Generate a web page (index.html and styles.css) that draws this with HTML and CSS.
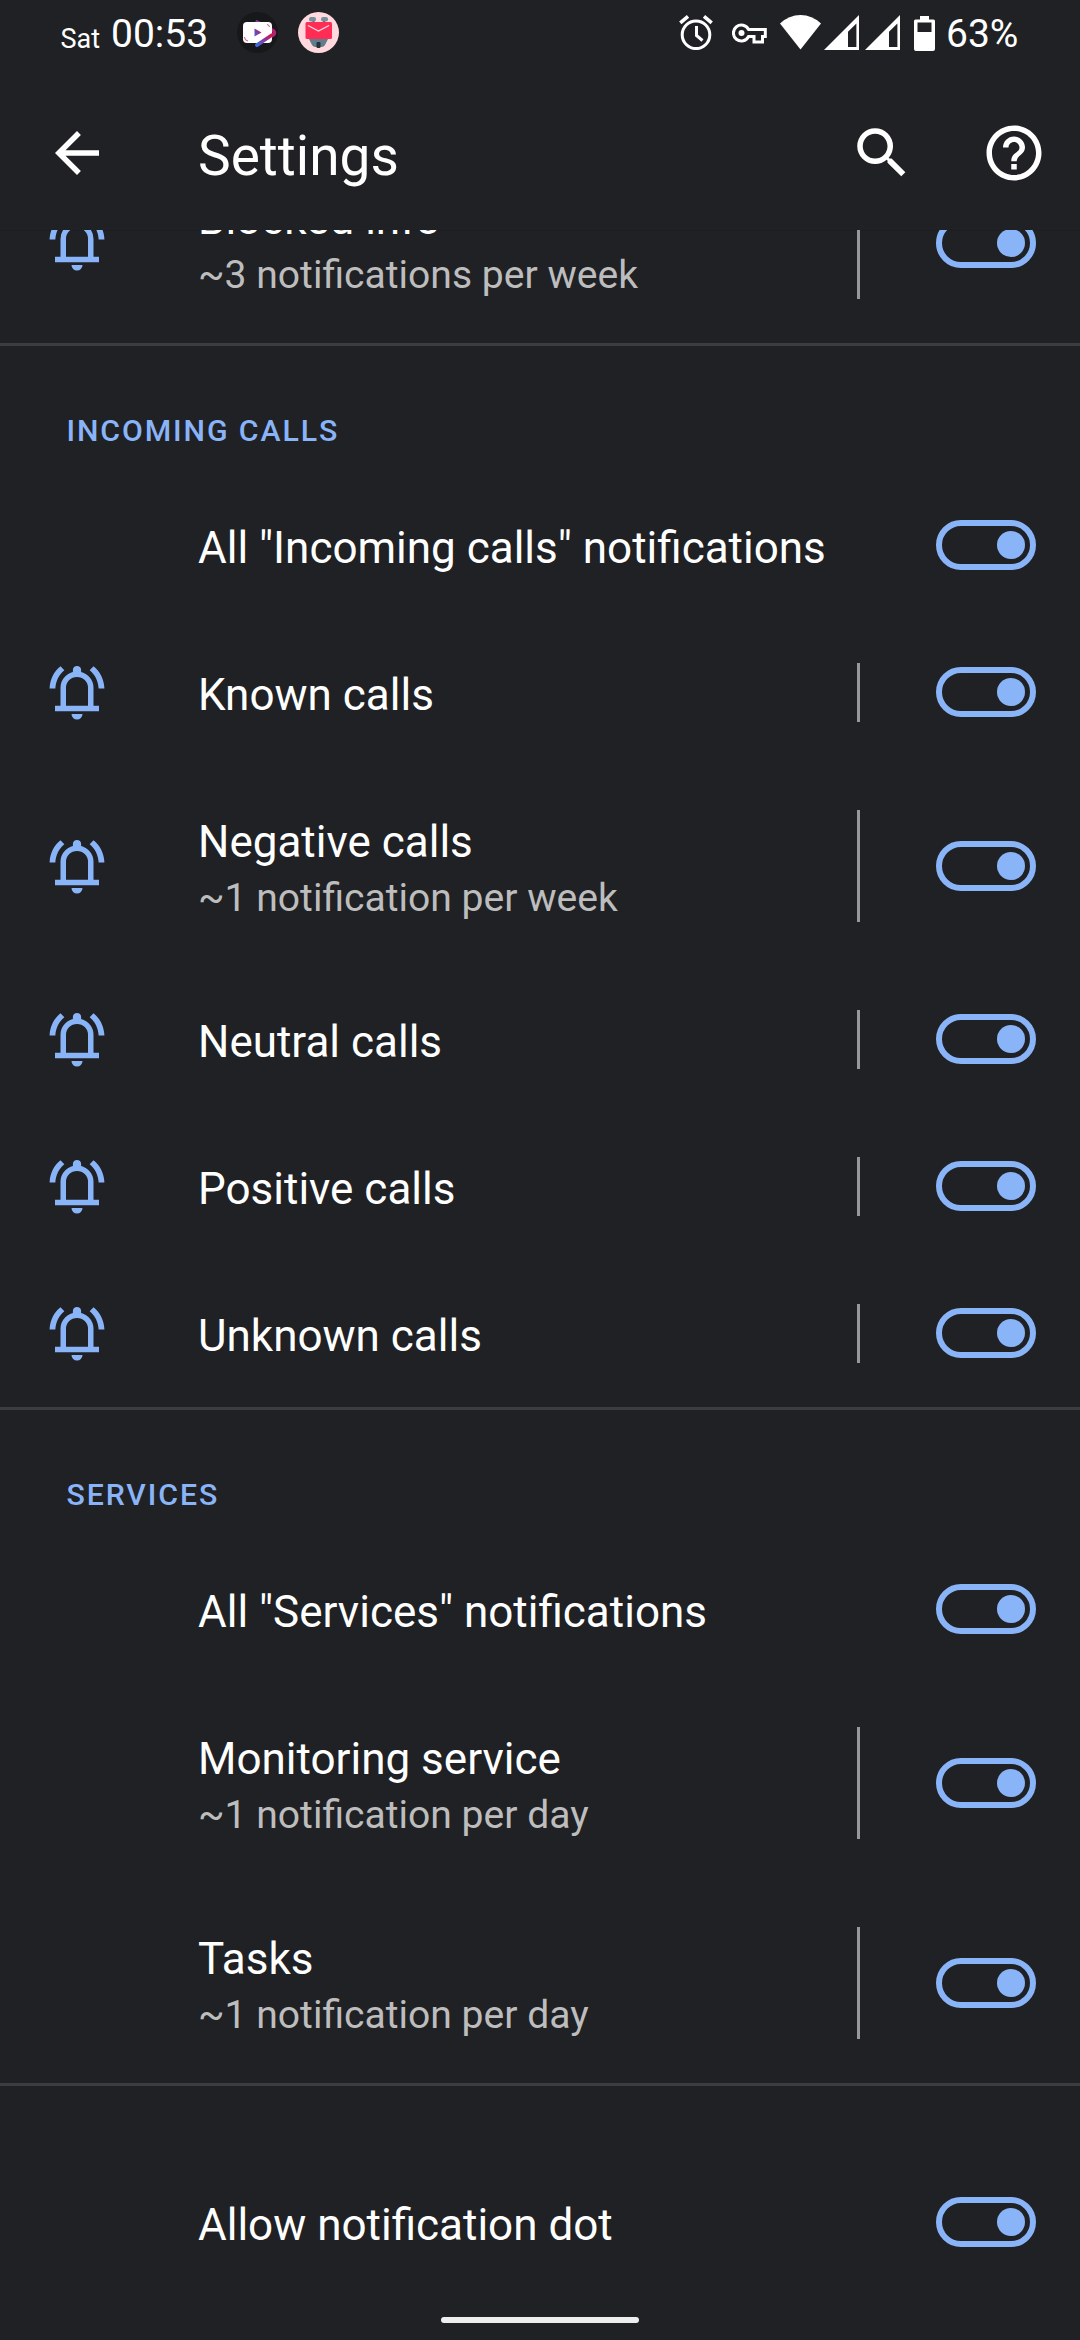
FILE: index.html
```html
<!DOCTYPE html>
<html lang="en">
<head>
<meta charset="utf-8">
<title>Settings</title>
<link rel="stylesheet" href="styles.css">
</head>
<body>
<svg class="defs" aria-hidden="true">
  <symbol id="bell" viewBox="0 0 24 24">
    <path d="M7 17.5V10.5a5 5 0 0 1 10 0V17.5" fill="none" stroke="currentColor" stroke-width="2"/>
    <path fill="currentColor" d="M4 17h16v2H4zM10 20h4a2 2 0 0 1-4 0zM10.5 5V4a1.5 1.5 0 0 1 3 0v1zM7.4 4.08L6 2.65C3.65 4.5 2.17 7.4 2.03 10.7h2.1c.12-2.65 1.3-5 3.27-6.62zM19.87 10.7h2.1c-.14-3.3-1.62-6.2-3.97-8.05l-1.4 1.43c1.97 1.62 3.15 3.97 3.27 6.62z"/>
  </symbol>
  <symbol id="signal" viewBox="0 0 35 35">
    <path fill="#fff" fill-rule="evenodd" d="M35 0V35H0zM32.400 8.500L24 16.800V32h8.400z"/>
  </symbol>
</svg>
<div class="screen">
  <header class="status">
    <span class="day">Sat</span>
    <span class="time">00:53</span>
    <svg class="app app-video" viewBox="0 0 41 41">
      <defs><linearGradient id="swoosh" x1="0" y1="1" x2="1" y2="0"><stop offset="0" stop-color="#3f6be0"/><stop offset=".55" stop-color="#8a3595"/><stop offset="1" stop-color="#e0104f"/></linearGradient></defs>
      <circle cx="20.500" cy="20.500" r="20.500" fill="#17181a"/>
      <path d="M20 10l16 8.500q3 2 0 4.500L20 33" fill="none" stroke="url(#swoosh)" stroke-width="3.600" stroke-linecap="round" stroke-linejoin="round"/>
      <rect x="6" y="10" width="29" height="21" rx="4" fill="#fff"/>
      <path d="M35 23L20 33" stroke="url(#swoosh)" stroke-width="3.400" stroke-linecap="round"/>
      <path d="M30 12.500q2 0 2.500 2.500M7.500 25q0 3.500 3.500 4" stroke="#c42660" stroke-width=".8" fill="none"/>
      <path d="M17.500 16.500v8l7-4z" fill="url(#swoosh)"/>
    </svg>
    <svg class="app" viewBox="0 0 41 41">
      <circle cx="20.500" cy="20.500" r="20.500" fill="#ffd9de"/>
      <path d="M14.500 7h2v4h-2zM25 7h2v4h-2z" fill="#455a64"/>
      <rect x="11" y="5" width="7" height="4.500" rx="2" fill="#78909c"/><rect x="23" y="5" width="7" height="4.500" rx="2" fill="#78909c"/>
      <path d="M10 25h21l-4 8q-1 2-3.500 2h-6q-2.500 0-3.500-2z" fill="#607d8b"/>
      <rect x="7.500" y="10" width="26.500" height="17" rx="1.500" fill="#ff2d55"/>
      <path d="M10 13.500l10.500 5.500L31 13.500" fill="none" stroke="#ffd9de" stroke-width="1.300"/>
      <rect x="18.500" y="30" width="4" height="6" rx="1" fill="#263238"/>
    </svg>
    <div class="indicators">
      <svg class="alarm" viewBox="0 0 34 35"><g fill="none" stroke="#fff"><circle cx="17" cy="19.800" r="13.800" stroke-width="3"/><path d="M1.300 7.800L9 1.400M32.700 7.800L25 1.400" stroke-width="3.600"/><path d="M17.500 11v9.500l6 5" stroke-width="3"/></g></svg>
      <svg class="key" viewBox="0 0 35 21"><path d="M16.600 6.500H33.300V13.500H30.500V19H22V13.500H16.600A8 8 0 1 1 16.600 6.500z" fill="none" stroke="#fff" stroke-width="3"/><circle cx="9.500" cy="10" r="3" fill="#fff"/></svg>
      <svg class="wifi" viewBox="0 0 41 35"><path d="M0 8.500Q9 0 20.500 0T41 8.500L20.500 34.500z" fill="#fff"/></svg>
      <svg class="signal"><use href="#signal"/></svg>
      <svg class="signal"><use href="#signal"/></svg>
      <svg class="battery" viewBox="0 0 21 35"><path fill="#fff" fill-rule="evenodd" d="M6 0h9v3.500h4.500q1.500 0 1.500 1.500v28q0 2-2 2H2q-2 0-2-2V5q0-1.500 1.500-1.500H6zM3.500 6.500V16h14V6.500z"/></svg>
      <span class="percent">63%</span>
    </div>
  </header>

  <nav class="appbar">
    <svg class="icon" viewBox="0 0 24 24"><path fill="#fff" d="M20 11H7.830l5.590-5.590L12 4l-8 8 8 8 1.410-1.410L7.830 13H20z"/></svg>
    <h1 class="title">Settings</h1>
    <svg class="icon search" viewBox="0 0 24 24"><path fill="#fff" d="M15.500 14h-.79l-.28-.27A6.471 6.471 0 0 0 16 9.500 6.500 6.500 0 1 0 9.500 16c1.610 0 3.090-.59 4.230-1.570l.27.28v.79l5 4.990L20.490 19zm-6 0C7.010 14 5 11.990 5 9.500S7.010 5 9.500 5 14 7.010 14 9.500 11.990 14 9.500 14z"/></svg>
    <svg class="icon" viewBox="0 0 24 24"><path fill="#fff" d="M11 18h2v-2h-2zm1-16C6.480 2 2 6.480 2 12s4.480 10 10 10 10-4.480 10-10S17.520 2 12 2zm0 18c-4.410 0-8-3.590-8-8s3.590-8 8-8 8 3.590 8 8-3.590 8-8 8zm0-14c-2.210 0-4 1.790-4 4h2c0-1.100.9-2 2-2s2 .9 2 2c0 2-3 1.750-3 5h2c0-2.250 3-2.500 3-5 0-2.210-1.790-4-4-4z"/></svg>
  </nav>

  <main class="list">
    <section class="group scrolled">
      <div class="row"><svg class="bell"><use href="#bell"/></svg><div class="text"><div class="name">Blocked info</div><div class="summary">~3 notifications per week</div></div><i class="sep"></i><i class="switch"></i></div>
    </section>

    <section class="group">
      <h2 class="category">INCOMING CALLS</h2>
      <div class="row"><div class="text"><div class="name">All "Incoming calls" notifications</div></div><i class="switch"></i></div>
      <div class="row"><svg class="bell"><use href="#bell"/></svg><div class="text"><div class="name">Known calls</div></div><i class="sep"></i><i class="switch"></i></div>
      <div class="row"><svg class="bell"><use href="#bell"/></svg><div class="text"><div class="name">Negative calls</div><div class="summary">~1 notification per week</div></div><i class="sep"></i><i class="switch"></i></div>
      <div class="row"><svg class="bell"><use href="#bell"/></svg><div class="text"><div class="name">Neutral calls</div></div><i class="sep"></i><i class="switch"></i></div>
      <div class="row"><svg class="bell"><use href="#bell"/></svg><div class="text"><div class="name">Positive calls</div></div><i class="sep"></i><i class="switch"></i></div>
      <div class="row"><svg class="bell"><use href="#bell"/></svg><div class="text"><div class="name">Unknown calls</div></div><i class="sep"></i><i class="switch"></i></div>
    </section>

    <section class="group">
      <h2 class="category">SERVICES</h2>
      <div class="row"><div class="text"><div class="name">All "Services" notifications</div></div><i class="switch"></i></div>
      <div class="row"><div class="text"><div class="name">Monitoring service</div><div class="summary">~1 notification per day</div></div><i class="sep"></i><i class="switch"></i></div>
      <div class="row"><div class="text"><div class="name">Tasks</div><div class="summary">~1 notification per day</div></div><i class="sep"></i><i class="switch"></i></div>
    </section>

    <section class="group last">
      <div class="row"><div class="text"><div class="name">Allow notification dot</div></div><i class="switch"></i></div>
    </section>
  </main>
  <div class="home"></div>
</div>
</body>
</html>
```
FILE: styles.css
```css
* { box-sizing: border-box; }
body {
  margin: 0;
  background: #202124;
  color: #fff;
  font-family: Roboto, "Liberation Sans", sans-serif;
}
h1, h2 { margin: 0; font-weight: 400; }
svg { display: block; flex: none; }
.defs { width: 0; height: 0; position: absolute; }

.screen {
  position: relative;
  display: flex;
  flex-direction: column;
  width: 1080px;
  height: 2340px;
  overflow: hidden;
  background: #202124;
}

/* status bar */
.status {
  display: flex;
  align-items: flex-start;
  height: 76px;
  padding: 0 62px 0 60.5px;
  white-space: nowrap;
}
.day { width: 50.5px; font-size: 27px; line-height: 32px; padding-top: 23px; }
.time { width: 126px; font-size: 39px; line-height: 45px; padding-top: 12px; }
.app { width: 41px; height: 41px; margin-top: 12px; }
.app-video { margin-right: 20px; }
.indicators { display: flex; align-items: flex-start; margin-left: auto; }
.alarm { width: 34px; height: 35px; margin: 15px 19px 0 0; }
.key { width: 35px; height: 21px; margin: 23px 13px 0 0; }
.wifi { width: 41px; height: 35px; margin: 15px 3px 0 0; }
.signal { width: 35px; height: 35px; margin: 15px 6px 0 0; }
.battery { width: 21px; height: 35px; margin: 16px 0 0 8px; }
.percent { width: 72px; margin-left: 11px; font-size: 39px; line-height: 45px; padding-top: 12px; }

/* app bar */
.appbar {
  display: flex;
  align-items: flex-start;
  height: 154px;
  padding: 44px 33px 0 44px;
}
.icon { width: 66px; height: 66px; }
.search { margin-right: 66px; }
.title { flex: 1; margin-left: 88px; padding-top: 4px; font-size: 55px; line-height: 64px; }

/* preference list */
.list {
  flex: 1;
  overflow: hidden;
  box-shadow: inset 0 1px 0 #1d1e21;
}
.group { border-bottom: 3px solid #3c3d41; }
.scrolled { margin-top: -87px; }
.last { padding-top: 63px; border-bottom: 0; }
.category {
  height: 126px;
  padding: 67px 0 0 66.5px;
  color: #8ab4f8;
  font-size: 30.25px;
  font-weight: 500;
  line-height: 36px;
  letter-spacing: 1.9px;
}
.row {
  display: flex;
  align-items: center;
  padding: 44px 44px 44px 198px;
}
.bell {
  width: 66px;
  height: 66px;
  margin: -5px 88px -4px -154px;
  color: #8ab4f8;
}
.text { flex: 1; white-space: nowrap; }
.name { padding-top: 5px; font-size: 44px; line-height: 54px; }
.summary { padding-top: 5px; color: #bdbdbe; font-size: 39.1px; line-height: 48px; }
.sep { align-self: stretch; width: 3px; margin-right: 76px; background: #98989a; }
.switch {
  width: 100px;
  height: 50px;
  flex: none;
  display: flex;
  align-items: center;
  justify-content: flex-end;
  margin-bottom: 1px;
  padding-right: 5px;
  border: 6px solid #8ab4f8;
  border-radius: 25px;
}
.switch::before { content: ""; width: 28px; height: 28px; border-radius: 50%; background: #8ab4f8; }

/* gesture handle */
.home {
  position: absolute;
  left: 441px;
  top: 2317px;
  width: 198px;
  height: 6px;
  border-radius: 3px;
  background: #eee;
}
```
